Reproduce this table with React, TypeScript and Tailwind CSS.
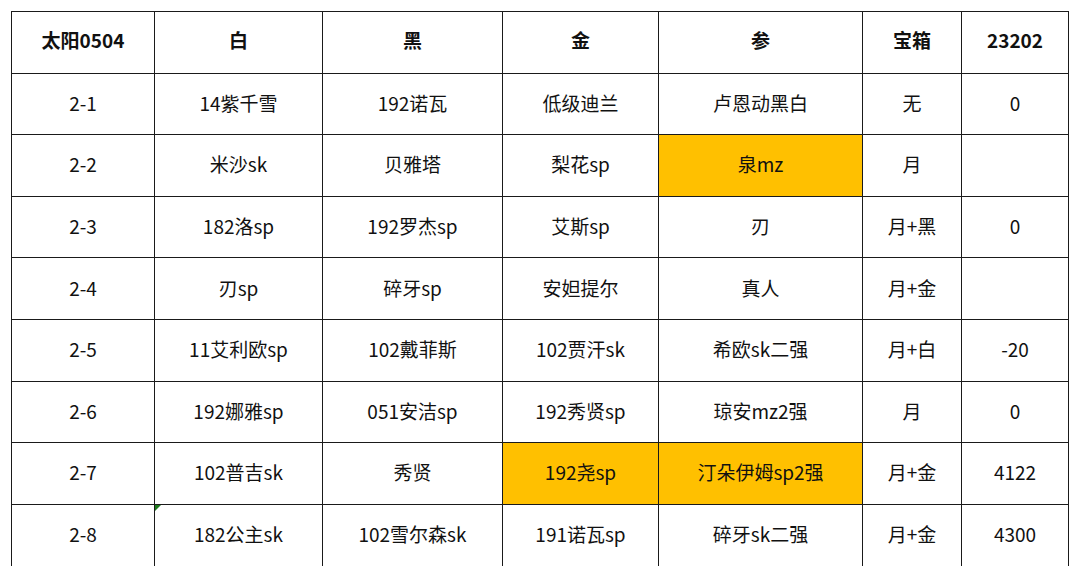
import React from 'react';

type Cell = { text: string; hl?: boolean };

const header = ['太阳0504', '白', '黑', '金', '参', '宝箱', '23202'];

const rows: Cell[][] = [
  [{ text: '2-1' }, { text: '14紫千雪' }, { text: '192诺瓦' }, { text: '低级迪兰' }, { text: '卢恩动黑白' }, { text: '无' }, { text: '0' }],
  [{ text: '2-2' }, { text: '米沙sk' }, { text: '贝雅塔' }, { text: '梨花sp' }, { text: '泉mz', hl: true }, { text: '月' }, { text: '' }],
  [{ text: '2-3' }, { text: '182洛sp' }, { text: '192罗杰sp' }, { text: '艾斯sp' }, { text: '刃' }, { text: '月+黑' }, { text: '0' }],
  [{ text: '2-4' }, { text: '刃sp' }, { text: '碎牙sp' }, { text: '安妲提尔' }, { text: '真人' }, { text: '月+金' }, { text: '' }],
  [{ text: '2-5' }, { text: '11艾利欧sp' }, { text: '102戴菲斯' }, { text: '102贾汗sk' }, { text: '希欧sk二强' }, { text: '月+白' }, { text: '-20' }],
  [{ text: '2-6' }, { text: '192娜雅sp' }, { text: '051安洁sp' }, { text: '192秀贤sp' }, { text: '琼安mz2强' }, { text: '月' }, { text: '0' }],
  [{ text: '2-7' }, { text: '102普吉sk' }, { text: '秀贤' }, { text: '192尧sp', hl: true }, { text: '汀朵伊姆sp2强', hl: true }, { text: '月+金' }, { text: '4122' }],
  [{ text: '2-8' }, { text: '182公主sk' }, { text: '102雪尔森sk' }, { text: '191诺瓦sp' }, { text: '碎牙sk二强' }, { text: '月+金' }, { text: '4300' }],
];

const widths = ['w-[143px]', 'w-[168px]', 'w-[180px]', 'w-[156px]', 'w-[204px]', 'w-[99px]', 'w-[107px]'];

export default function App() {
  return (
    <div className="w-[1080px] h-[576px] overflow-hidden bg-white pl-[11px] pt-[11px] font-['Noto_Sans_CJK_SC','Noto_Sans',sans-serif] text-[#111]">
      <table className="border-collapse table-fixed w-[1058px] text-[19px]">
        <colgroup>
          {widths.map((w, i) => (
            <col key={i} className={w} />
          ))}
        </colgroup>
        <thead>
          <tr className="h-[61.6px]">
            {header.map((h, i) => (
              <th key={i} className="border-[1.5px] border-[#1a1a1a] text-center font-bold p-0 pb-[5px] leading-none">
                {h}
              </th>
            ))}
          </tr>
        </thead>
        <tbody>
          {rows.map((row, r) => {
            const last = r === rows.length - 1;
            return (
              <tr key={r} className="h-[61.6px]">
                {row.map((c, i) => (
                  <td
                    key={i}
                    className={`relative border-[1.5px] border-[#1a1a1a] text-center p-0 pb-[3px] leading-none ${last ? 'border-b-0' : ''} ${
                      c.hl ? 'bg-[#ffc000]' : ''
                    }`}
                  >
                    {last && i === 1 && (
                      <span className="absolute left-0 top-0 w-0 h-0 border-t-[6px] border-t-[#1e7b1e] border-r-[6px] border-r-transparent" />
                    )}
                    {c.text}
                  </td>
                ))}
              </tr>
            );
          })}
        </tbody>
      </table>
    </div>
  );
}
